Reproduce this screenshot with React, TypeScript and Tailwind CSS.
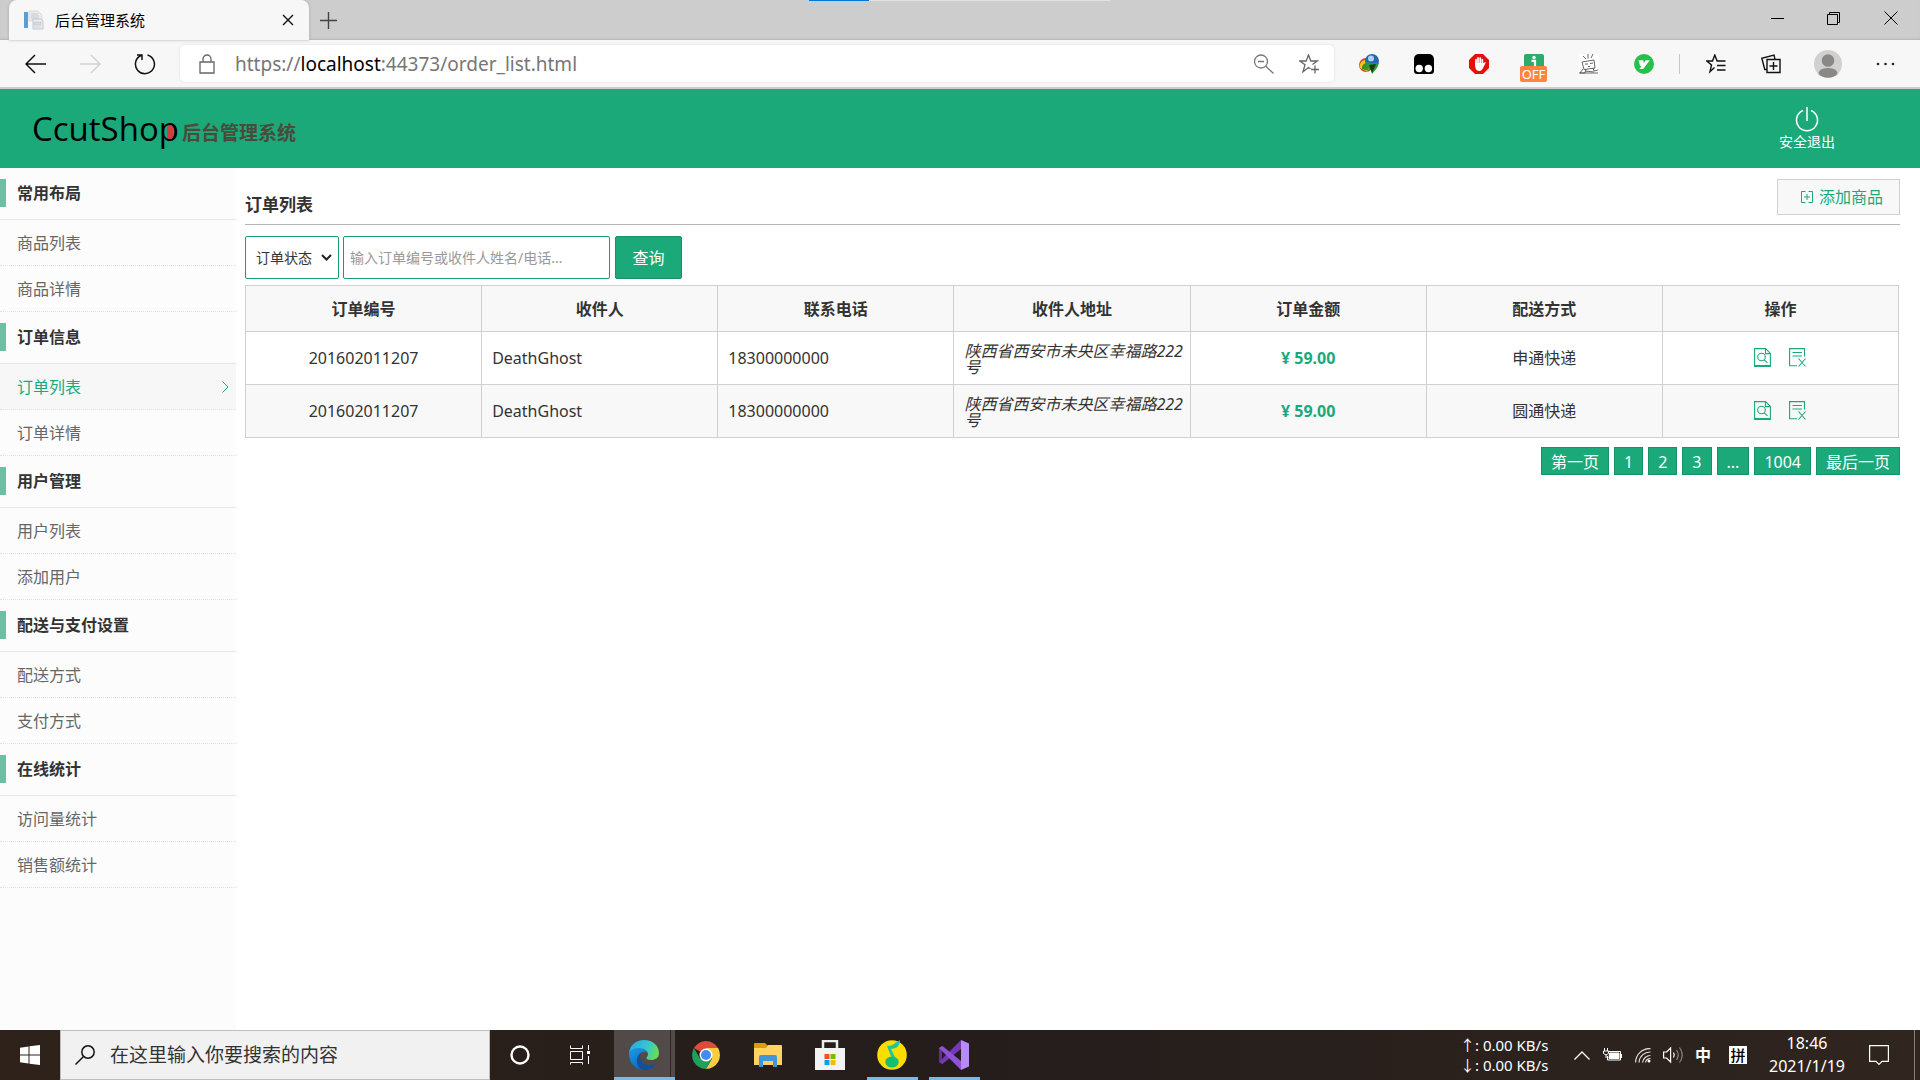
import type { ReactNode } from 'react';

const menu = [
  { title: '常用布局', items: ['商品列表', '商品详情'] },
  { title: '订单信息', items: ['订单列表', '订单详情'] },
  { title: '用户管理', items: ['用户列表', '添加用户'] },
  { title: '配送与支付设置', items: ['配送方式', '支付方式'] },
  { title: '在线统计', items: ['访问量统计', '销售额统计'] },
];

const columns = ['订单编号', '收件人', '联系电话', '收件人地址', '订单金额', '配送方式', '操作'];

const orders = [
  { id: '201602011207', name: 'DeathGhost', phone: '18300000000', address: '陕西省西安市未央区幸福路222号', total: '59.00', ship: '申通快递' },
  { id: '201602011207', name: 'DeathGhost', phone: '18300000000', address: '陕西省西安市未央区幸福路222号', total: '59.00', ship: '圆通快递' },
];

const pages = ['第一页', '1', '2', '3', '...', '1004', '最后一页'];

function IconButton({ label, className, children }: { label: string; className?: string; children: ReactNode }) {
  return (
    <button type="button" aria-label={label} className={`flex shrink-0 items-center justify-center ${className ?? ''}`}>
      {children}
    </button>
  );
}

function TabStrip() {
  return (
    <div className="relative flex h-10 items-stretch bg-[#cdcdcd] shadow-[inset_0_-2px_2px_-1px_#b4b4b4]">
      <div className="absolute left-[809px] top-0 flex h-px w-[301px] bg-[#e3e3e3]">
        <div className="w-[60px] bg-[#0078d7]" />
      </div>
      <div className="z-10 ml-[9px] flex w-[300px] items-center rounded-t-lg bg-[#f7f7f7] pl-[15px] pr-3 shadow-[0_0_3px_#aaa]">
        <svg width="20" height="20" viewBox="0 0 20 20" aria-hidden="true">
          <rect x="0" y="2" width="4" height="16" fill="#5a9fd0" />
          <path d="M5 1h9l4 4v6H5z" fill="#e9ecef" stroke="#cfd3d8" strokeWidth="0.7" />
          <path d="M7 4h7M7 6h8M7 8h8" stroke="#c5cad2" />
          <path d="M9 9h8l2 2v8H9z" fill="#eceef2" stroke="#b9bdc6" strokeWidth="0.8" />
          <path d="M10 12h7v3h-7zM10 17h7" fill="#d8dbe2" stroke="#bfc3cc" strokeWidth="0.6" />
        </svg>
        <span className="ml-[11px] flex-1 text-[15px] leading-5 text-black">后台管理系统</span>
        <IconButton label="关闭标签页" className="h-6 w-[18px]">
          <svg width="12" height="12" viewBox="0 0 12 12" stroke="#111" strokeWidth="1.4"><path d="M1 1l10 10M11 1L1 11" /></svg>
        </IconButton>
      </div>
      <IconButton label="新建标签页" className="w-[38px]">
        <svg width="17" height="17" viewBox="0 0 17 17" stroke="#444" strokeWidth="1.4"><path d="M8.5 0v17M0 8.5h17" /></svg>
      </IconButton>
      <div className="flex-1" />
      <IconButton label="最小化" className="h-9 w-14">
        <svg width="13" height="13" viewBox="0 0 13 13" stroke="#000"><path d="M0 6.5h13" /></svg>
      </IconButton>
      <IconButton label="还原" className="h-9 w-14">
        <svg width="13" height="13" viewBox="0 0 13 13" fill="none" stroke="#000"><path d="M.5 2.5h10v10H.5zM2.5 2.5v-2h10v10h-2" /></svg>
      </IconButton>
      <IconButton label="关闭" className="h-9 w-[59px]">
        <svg width="14" height="14" viewBox="0 0 14 14" stroke="#000"><path d="M.5.5l13 13M13.5.5l-13 13" /></svg>
      </IconButton>
    </div>
  );
}

function Extensions() {
  return (
    <>
      <IconButton label="IDM" className="w-[55px]">
        <svg width="22" height="20" viewBox="0 0 22 20">
          <circle cx="8" cy="11" r="7" fill="#d9431e" />
          <path d="M2 14a6 6 0 0 1 6-8l4 4-2 8z" fill="#f3c61c" />
          <path d="M4 15a5 5 0 0 1 5-6l2 8z" fill="#3e8e2f" />
          <circle cx="14" cy="7" r="7" fill="#2a63b8" />
          <circle cx="13" cy="4.5" r="3" fill="#a9d4f2" />
          <path d="M8 8l5 1 5 0 3 0-2 5-5 6-1-4-5-3z" fill="#2c9a35" />
          <path d="M11 11l7-1-4 9z" fill="#123f14" />
        </svg>
      </IconButton>
      <IconButton label="Tampermonkey" className="w-[55px]">
        <svg width="20" height="20" viewBox="0 0 20 20">
          <path d="M4 0h12q3.5 1 4 5v12q0 3-3 3H3q-3 0-3-3V5q0-4 4-5z" fill="#000" />
          <circle cx="5.2" cy="14.5" r="3.7" fill="#fff" /><circle cx="14.4" cy="14.5" r="3.7" fill="#fff" />
        </svg>
      </IconButton>
      <IconButton label="AdBlock" className="w-[55px]">
        <svg width="20" height="20" viewBox="0 0 20 20">
          <path d="M6 0h8l6 6v8l-6 6H6l-6-6V6z" fill="#e60d0d" />
          <path d="M7 11V5.5M9 10V3.8M11.2 10V4M13.3 11V5.5" stroke="#fff" strokeWidth="1.7" strokeLinecap="round" />
          <path d="M6.2 9h8l2.3-1q.6.5-.2 1.4L13.500 15q-1 2-3.300 2-3.200 0-4-4z" fill="#fff" />
        </svg>
      </IconButton>
      <div className="relative flex w-[55px] justify-center">
        <IconButton label="信息扩展，已关闭">
          <svg width="20" height="20" viewBox="0 0 20 20">
            <rect width="20" height="20" rx="2" fill="#2eab68" />
            <circle cx="10" cy="3.5" r="1.7" fill="#fff" /><path d="M7.500 6.800h3.500v7" stroke="#fff" strokeWidth="2.200" fill="none" />
          </svg>
        </IconButton>
        <span className="absolute top-[21px] rounded-[2px] bg-[#ff8440] px-[2px] text-[13px] leading-4 text-white">OFF</span>
      </div>
      <IconButton label="哔哩助手" className="w-[55px]">
        <svg width="20" height="20" viewBox="0 0 20 20" fill="none" stroke="#555" strokeWidth="0.9">
          <rect width="20" height="20" fill="#fff" stroke="none" />
          <path d="M3 8l12-2 1 8-11 1.500zM7 5L4 2M9 4.500V0M12 4l2-4M6 10l3 0M11 9.500l3-.5M9 12.500h2M4 15l-3 4h5l1-4M14 14l1 3 4-1M6 17l9 1M0 19h19" />
        </svg>
      </IconButton>
      <IconButton label="油小猴" className="w-[55px]">
        <svg width="20" height="20" viewBox="0 0 20 20">
          <circle cx="10" cy="10" r="10" fill="#27c04a" />
          <path d="M4.500 6.200h4.800l.4 3 2-3h4.100L9.200 15H5.400l2.200-3.100h-1.500z" fill="#fff" />
        </svg>
      </IconButton>
    </>
  );
}

function Toolbar() {
  return (
    <div className="flex h-[49px] items-stretch border-b-2 border-[#cdcdcd] bg-[#f7f7f7] py-[5px]">
      <IconButton label="后退" className="w-[70px]">
        <svg width="21" height="20" viewBox="0 0 21 20" fill="none" stroke="#111" strokeWidth="1.5"><path d="M10 1L1 10l9 9M1 10h20" /></svg>
      </IconButton>
      <IconButton label="前进" className="w-10">
        <svg width="21" height="20" viewBox="0 0 21 20" fill="none" stroke="#d2d2d2" strokeWidth="1.5"><path d="M11 1l9 9-9 9M0 10h20" /></svg>
      </IconButton>
      <IconButton label="刷新" className="w-[70px]">
        <svg width="22" height="22" viewBox="0 0 22 22" fill="none" stroke="#111" strokeWidth="1.5"><path d="M13.500 2a9.500 9.500 0 1 1-6.500.5M3 2h5v5" /></svg>
      </IconButton>
      <div className="flex flex-1 items-center rounded-[5px] bg-white pl-[19px] shadow-[0_0_3px_#ddd]">
        <svg width="16" height="20" viewBox="0 0 16 20" fill="none" stroke="#666" strokeWidth="1.3" aria-hidden="true"><path d="M1 8h14v11H1zM4 8V5a4 4 0 0 1 8 0v3" /></svg>
        <span className="ml-5 flex-1 text-[19px] leading-7 text-[#767676]">
          https://<span className="text-black">localhost</span>:44373/order_list.html
        </span>
        <IconButton label="缩放" className="w-[46px]">
          <svg width="21" height="20" viewBox="0 0 21 20" fill="none" stroke="#777" strokeWidth="1.3"><circle cx="8" cy="7.5" r="6.5" /><path d="M12.500 12l8 7.500M5 7.500h6" /></svg>
        </IconButton>
        <IconButton label="收藏此页" className="w-[46px]">
          <svg width="20" height="20" viewBox="0 0 20 20" fill="none" stroke="#666" strokeWidth="1.3"><path d="M11.500 14.800L9.500 13.500l-5.500 4.200 2-6.900L.8 7h6.400l2.300-6 2.300 6h6.400l-4.700 3.600M16 11.500v8M12 15.500h8" /></svg>
        </IconButton>
        <div className="w-[2px]" />
      </div>
      <div className="w-[7px]" />
      <Extensions />
      <div className="flex w-[17px] items-center justify-center"><div className="h-5 w-px bg-[#c8c8c8]" /></div>
      <IconButton label="收藏夹" className="w-[55px]">
        <svg width="20" height="20" viewBox="0 0 20 20" fill="none" stroke="#111" strokeWidth="1.4"><path d="M8.500 13.500L4 17.700l1.500-6.700L.8 7h5.700l2.300-6 2.300 6h8.400M11 11.500h8.500M11 16h8.500" /></svg>
      </IconButton>
      <IconButton label="集锦" className="w-[55px]">
        <svg width="20" height="20" viewBox="0 0 20 20" fill="none" stroke="#111" strokeWidth="1.4"><path d="M6 5.500h13v13H6zM12.500 8v8M8.500 12h8M6 15.500H3.800L.8 4.200 13 1l1 4.500" /></svg>
      </IconButton>
      <IconButton label="个人资料" className="w-[60px]">
        <svg width="28" height="28" viewBox="0 0 28 28"><circle cx="14" cy="14" r="14" fill="#d2d0ce" /><circle cx="14" cy="10.5" r="6.3" fill="#8a8886" /><path d="M4.500 24q0-6 9.500-6t9.500 6a14 14 0 0 1-19 0z" fill="#8a8886" /></svg>
      </IconButton>
      <IconButton label="设置及其他" className="w-[54px]">
        <svg width="19" height="4" viewBox="0 0 19 4" fill="#222"><circle cx="2" cy="2" r="1.3" /><circle cx="9.5" cy="2" r="1.3" /><circle cx="17" cy="2" r="1.3" /></svg>
      </IconButton>
      <div className="w-2" />
    </div>
  );
}

function SiteHeader() {
  return (
    <header className="flex h-[79px] items-center justify-between bg-[#1ba97a] pl-8 pr-[85px]">
      <h1 className="flex items-center">
        <span className="relative font-['Open_Sans',sans-serif] text-[33px] leading-[48px] text-black">
          CcutShop
          <span className="absolute right-[6px] top-[20px] h-[14px] w-[6px] rounded-full bg-[#d23c3c]" />
        </span>
        <span className="ml-[3px] pt-2 text-[19px] font-bold leading-6 text-[#4b4a3b]">后台管理系统</span>
      </h1>
      <a href="#logout" className="flex flex-col items-center pt-[2px] text-white">
        <svg width="24" height="25" viewBox="0 0 24 25" fill="none" stroke="#fff" strokeWidth="1.5" aria-hidden="true"><path d="M12 0v14M8 3.500a10.500 10.500 0 1 0 8 0" /></svg>
        <span className="text-sm leading-5">安全退出</span>
      </a>
    </header>
  );
}

function Sidebar() {
  return (
    <nav className="w-[236px] shrink-0 bg-[#fcfcfc]">
      {menu.map((group) => (
        <section key={group.title}>
          <h2 className="flex h-[52px] items-start border-b border-[#e6e6e6] pt-[11px] text-base font-bold text-[#333]">
            <span className="h-7 w-[6px] bg-[#69c0a3]" />
            <span className="ml-[11px] leading-7">{group.title}</span>
          </h2>
          <ul>
            {group.items.map((item) => {
              const active = item === '订单列表';
              return (
                <li key={item}>
                  <a
                    href="#menu"
                    className={`flex h-[46px] items-center justify-between border-b border-dotted border-[#e2e2e2] pl-[17px] pr-[7px] text-base ${active ? 'bg-[#f7f7f7] text-[#1ba97a]' : 'text-[#666]'}`}
                  >
                    {item}
                    {active && (
                      <svg width="7" height="12" viewBox="0 0 7 12" fill="none" stroke="#1ba97a" aria-hidden="true"><path d="M.5.5L6 6 .5 11.500" /></svg>
                    )}
                  </a>
                </li>
              );
            })}
          </ul>
        </section>
      ))}
    </nav>
  );
}

function RowActions() {
  return (
    <div className="flex items-center justify-center gap-[18px] pb-[2px] text-[#1ba97a]">
      <a href="#view" aria-label="查看订单">
        <svg width="17" height="19" viewBox="0 0 17 19" fill="none" stroke="currentColor" strokeWidth="1.1"><path d="M.6.6h11l4.800 4.800v13H.6zM11.500.6v5h5M.6 17.500h15.800" /><circle cx="7.5" cy="9" r="3.8" /><path d="M10.200 11.800l3.300 3" /></svg>
      </a>
      <a href="#delete" aria-label="删除订单">
        <svg width="17" height="19" viewBox="0 0 17 19" fill="none" stroke="currentColor" strokeWidth="1.1"><path d="M15.500 8.500V.6H.6v17.200h7.400M3.500 4.500h9.500M3.500 8h9.500M9.500 10.500l7 8M16.500 10.500l-7 8" /></svg>
      </a>
    </div>
  );
}

const cell = 'border border-[#d0d0d0]';

function OrderPage() {
  return (
    <main className="min-w-0 flex-1 pl-[9px] pr-5">
      <div className="flex h-[57px] items-start justify-between border-b border-[#b4b4b4] pt-[11px]">
        <h2 className="pt-[14px] text-[17px] font-bold leading-6 text-[#333]">订单列表</h2>
        <a href="#add" className="flex h-9 items-center gap-[6px] border border-[#d0d0d0] bg-[#f8f8f8] pl-[23px] pr-4 text-base leading-6 text-[#1ba97a]">
          <svg width="12" height="12" viewBox="0 0 12 12" fill="none" stroke="currentColor" aria-hidden="true"><path d="M4.500.5h-4v11h4M7.500.5h4v11h-4M3 6h6M6 3v6" /></svg>
          添加商品
        </a>
      </div>
      <form className="mt-[11px] flex h-[43px]" onSubmit={(e) => e.preventDefault()}>
        <div className="relative w-[94px]">
          <select aria-label="订单状态" className="h-full w-full appearance-none rounded-[2px] border border-[#1a9c70] bg-white pl-[10px] text-sm text-[#333]">
            <option>订单状态</option>
            <option>待付款</option>
            <option>待发货</option>
          </select>
          <svg className="pointer-events-none absolute right-[7px] top-[18px]" width="11" height="7" viewBox="0 0 11 7" fill="none" stroke="#222" strokeWidth="2" aria-hidden="true"><path d="M1 1l4.500 4.500L10 1" /></svg>
        </div>
        <input type="text" aria-label="订单编号或收件人" placeholder="输入订单编号或收件人姓名/电话..." className="ml-1 w-[267px] rounded-[2px] border border-[#1a9c70] bg-white px-[6px] text-sm placeholder:text-[#999]" />
        <button type="submit" className="ml-[5px] w-[67px] rounded-[2px] border border-[#159268] bg-[#1ba97a] text-base text-white">查询</button>
      </form>
      <div className="pr-px">
        <table className="mt-[6px] w-full table-fixed border-collapse text-base text-[#333]">
          <thead>
            <tr className="h-[46px] bg-[#f8f8f8]">
              {columns.map((c) => (
                <th key={c} scope="col" className={`${cell} font-bold leading-6`}>{c}</th>
              ))}
            </tr>
          </thead>
          <tbody>
            {orders.map((o) => (
              <tr key={o.ship} className="h-[53px] even:bg-[#f8f8f8]">
                <td className={`${cell} text-center`}>{o.id}</td>
                <td className={`${cell} px-[10px]`}>{o.name}</td>
                <td className={`${cell} px-[10px]`}>{o.phone}</td>
                <td className={`${cell} pl-[10px] pr-1 pt-[2px]`}>
                  <address className="break-all text-base leading-4">{o.address}</address>
                </td>
                <td className={`${cell} text-center`}><strong className="text-[#1ba97a]">¥ {o.total}</strong></td>
                <td className={`${cell} text-center`}>{o.ship}</td>
                <td className={cell}><RowActions /></td>
              </tr>
            ))}
          </tbody>
        </table>
      </div>
      <div className="mt-[9px] flex justify-end gap-[5px]">
        {pages.map((p) => (
          <a key={p} href="#page" className="h-7 border border-[#159268] bg-[#1ba97a] px-[9px] text-base leading-7 text-white">{p}</a>
        ))}
      </div>
    </main>
  );
}

function TaskApp({ label, running, children }: { label: string; running?: boolean; children: ReactNode }) {
  return (
    <button type="button" aria-label={label} className="relative flex w-[62px] items-center justify-center">
      {children}
      {running && <span className="absolute bottom-0 h-[3px] w-[51px] bg-[#76b9ed]" />}
    </button>
  );
}

function Taskbar() {
  return (
    <footer className="flex h-[50px] items-stretch bg-linear-to-r from-[#2e221b] via-[#241d1b] to-[#30251f] text-white">
      <IconButton label="开始" className="w-[60px]">
        <svg width="20" height="20" viewBox="0 0 20 20" fill="#fff"><path d="M0 2.700L8.500 1.500V9.500H0zM9.500 1.300L20 0v9.500H9.500zM0 10.500h8.500v8L0 17.300zM9.500 10.500H20V20L9.500 18.700z" /></svg>
      </IconButton>
      <label className="flex w-[430px] items-center border border-[#bdbdbd] bg-[#f1f1f1] pl-[14px]">
        <svg width="20" height="20" viewBox="0 0 20 20" fill="none" stroke="#111" strokeWidth="1.5" aria-hidden="true"><circle cx="13" cy="7" r="6.2" /><path d="M8.500 11.500L.5 19.500" /></svg>
        <input type="text" aria-label="搜索" placeholder="在这里输入你要搜索的内容" className="ml-[15px] flex-1 bg-transparent text-[19px] placeholder:text-[#333]" />
      </label>
      <IconButton label="Cortana" className="w-[60px]">
        <svg width="20" height="20" viewBox="0 0 20 20" fill="none" stroke="#fff" strokeWidth="2.4"><circle cx="10" cy="10" r="8.5" /></svg>
      </IconButton>
      <IconButton label="任务视图" className="w-[60px]">
        <svg width="20" height="20" viewBox="0 0 20 20" fill="none" stroke="#fff"><path d="M.5.5v3h12v-3M.5 6.500h12v8H.5zM.5 19.500v-2h12v2M18.500 0v5M18.500 11v8" /><path d="M17 6h3v3h-3z" fill="#fff" stroke="none" /></svg>
      </IconButton>
      <div className="w-1" />
      <button type="button" aria-label="Microsoft Edge" className="flex w-[61px] border-b-[3px] border-[#76b9ed] bg-[#524a48]">
        <span className="flex h-full flex-1 items-center justify-center border-r border-[#2c2625]">
          <svg width="30" height="30" viewBox="0 0 30 30" className="mt-[3px] ml-1">
            <defs>
              <linearGradient id="edgeTop" x1="0" y1="0.3" x2="1" y2="0.6"><stop offset="0" stopColor="#2ba9e0" /><stop offset="0.55" stopColor="#35c5d3" /><stop offset="1" stopColor="#66e04e" /></linearGradient>
              <linearGradient id="edgeSide" x1="0" y1="0" x2="0.6" y2="1"><stop offset="0" stopColor="#1b9de2" /><stop offset="1" stopColor="#0a66c2" /></linearGradient>
            </defs>
            <path d="M0 13C1 5 7 0 15 0c9 0 15 6 15 13 0 5-4 7-8 7-3 0-4.500-1-4.500-2 0-1 1.500-1.500 1.500-4 0-3-4-5-8.500-5C5 9 1.500 11 0 13z" fill="url(#edgeTop)" />
            <path d="M0 13c2-4 6-5 10-5 5 0 9 3 9 6-1-2-3-2.500-5-2-4 1-5 5-3 9 2 5 6 7 9 7-2 1.500-4 2-6 2C6 29.500 0 23 0 13z" fill="url(#edgeSide)" />
            <path d="M12 12.500c-2.500 5 0 13 8.500 12.500 4 0 6-1.500 7-2-3 5-7 7.500-13 7.300-5-2-7.500-6.500-6.500-11 .4-3 2-5.500 4-6.800z" fill="#10509e" />
          </svg>
        </span>
        <span className="h-full w-1" />
      </button>
      <TaskApp label="Google Chrome">
        <svg width="28" height="28" viewBox="0 0 28 28">
          <path d="M14 14L1.900 7A14 14 0 0 1 26.100 7z" fill="#dd4b3e" />
          <path d="M14 14V7h12.100A14 14 0 0 1 14 28l6-10.500z" fill="#fdcb3f" />
          <path d="M14 14l6 3.500L14 28A14 14 0 0 1 1.900 7L8 17.500z" fill="#1fa05c" />
          <circle cx="14" cy="14" r="6.5" fill="#fff" /><circle cx="14" cy="14" r="5" fill="#4688f4" />
        </svg>
      </TaskApp>
      <TaskApp label="文件资源管理器">
        <svg width="28" height="24" viewBox="0 0 28 24">
          <path d="M0 1q0-1 1-1h10l3 3v8H0z" fill="#e09b0c" /><path d="M0 5h12l2-3h13q1 0 1 1v19H0z" fill="#ffd262" />
          <path d="M5 24V14q0-2 2-2h14q2 0 2 2v10h-4v-6H9v6z" fill="#3f97da" />
        </svg>
      </TaskApp>
      <TaskApp label="Microsoft Store">
        <svg width="30" height="30" viewBox="0 0 30 30">
          <path d="M8 9V1h14v8" fill="none" stroke="#ececec" strokeWidth="2.5" /><path d="M0 8h30v22H0z" fill="#f3f3f3" />
          <path d="M9.500 14h5v5h-5z" fill="#f25022" /><path d="M15.500 14h5v5h-5z" fill="#7fba00" /><path d="M9.500 20h5v5h-5z" fill="#00a4ef" /><path d="M15.500 20h5v5h-5z" fill="#ffb900" />
        </svg>
      </TaskApp>
      <TaskApp label="QQ音乐" running>
        <svg width="30" height="30" viewBox="0 0 30 30">
          <circle cx="15" cy="15" r="14.8" fill="#fddc00" />
          <path d="M10 6q6 0 8-3l5-3q0 5-4 8l-5 1 6 12h-4z" fill="#17c8a4" /><ellipse cx="15" cy="22" rx="6.7" ry="5.5" fill="#19bd72" />
        </svg>
      </TaskApp>
      <TaskApp label="Visual Studio" running>
        <svg width="30" height="30" viewBox="0 0 30 30">
          <path d="M0 8l3-2v18l-3-2z" fill="#5f2d9d" /><path d="M0 22l3.500 2L22 9V0z" fill="#7238b5" />
          <path d="M3.500 6L22 21v9L0 8z" fill="#8f52d6" /><path d="M22 0l8 3.500v23L22 30z" fill="#b88af5" />
        </svg>
      </TaskApp>
      <div className="flex-1" />
      <div className="w-[102px] pt-[5px] text-[15px] leading-5">
        <p>↑: 0.00 KB/s</p>
        <p>↓: 0.00 KB/s</p>
      </div>
      <IconButton label="显示隐藏的图标" className="w-10">
        <svg width="16" height="9" viewBox="0 0 16 9" fill="none" stroke="#fff" strokeWidth="1.3"><path d="M.5 8.500L8 1l7.500 7.500" /></svg>
      </IconButton>
      <IconButton label="电池" className="w-[22px]">
        <svg width="20" height="14" viewBox="0 0 20 14" fill="none" stroke="#fff"><path d="M6 3.500h11.500v8.500H4.500V8M18.500 6v4" /><path d="M6.500 5H16v5.500H6z" fill="#fff" /><path d="M1.500 0v3M4.500 0v3M.5 3h5v2.500L3 7 .5 5.500zM3 7v3" /></svg>
      </IconButton>
      <IconButton label="网络" className="w-[38px]">
        <svg width="16" height="15" viewBox="0 0 16 15" fill="none" stroke="#ddd" strokeWidth="1.2"><path d="M.6 14.500A14 14 0 0 1 15.500.6M4 14.500A11 11 0 0 1 15.500 4M7.500 14.500a8 8 0 0 1 8-7M10.500 14.500a5 5 0 0 1 5-4" /><circle cx="14" cy="13" r="1.5" fill="#fff" stroke="none" /></svg>
      </IconButton>
      <IconButton label="音量" className="w-[22px]">
        <svg width="21" height="18" viewBox="0 0 21 18" fill="none" stroke="#fff" strokeWidth="1.2"><path d="M.6 6h3l4-4v14l-4-4h-3zM10.500 6.500q1.500 2.500 0 5" /><path d="M13.500 4q3.500 5 0 10M16.500 1.500q5.500 7.500 0 15" stroke="#888" /></svg>
      </IconButton>
      <IconButton label="输入法：中文" className="w-[38px] text-base font-bold">中</IconButton>
      <IconButton label="拼音" className="w-8">
        <span className="flex size-[18px] items-center justify-center bg-white text-[15px] font-medium leading-[18px] text-black">拼</span>
      </IconButton>
      <button type="button" className="flex w-[106px] flex-col items-center pt-[2px] text-base leading-[23px]">
        <span>18:46</span>
        <span>2021/1/19</span>
      </button>
      <IconButton label="通知" className="w-[38px]">
        <svg width="20" height="20" viewBox="0 0 20 20" fill="none" stroke="#fff" strokeWidth="1.2"><path d="M.6.6h18.800v15.800H13L10 19.400 7 16.400H.6z" /></svg>
      </IconButton>
      <div className="ml-4 mr-[5px] w-px bg-[#85807c]" />
    </footer>
  );
}

export default function App() {
  return (
    <div className="flex min-h-screen flex-col bg-white font-['Noto_Sans','Noto_Sans_CJK_SC',sans-serif]">
      <TabStrip />
      <Toolbar />
      <SiteHeader />
      <div className="flex flex-1">
        <Sidebar />
        <OrderPage />
      </div>
      <Taskbar />
    </div>
  );
}
